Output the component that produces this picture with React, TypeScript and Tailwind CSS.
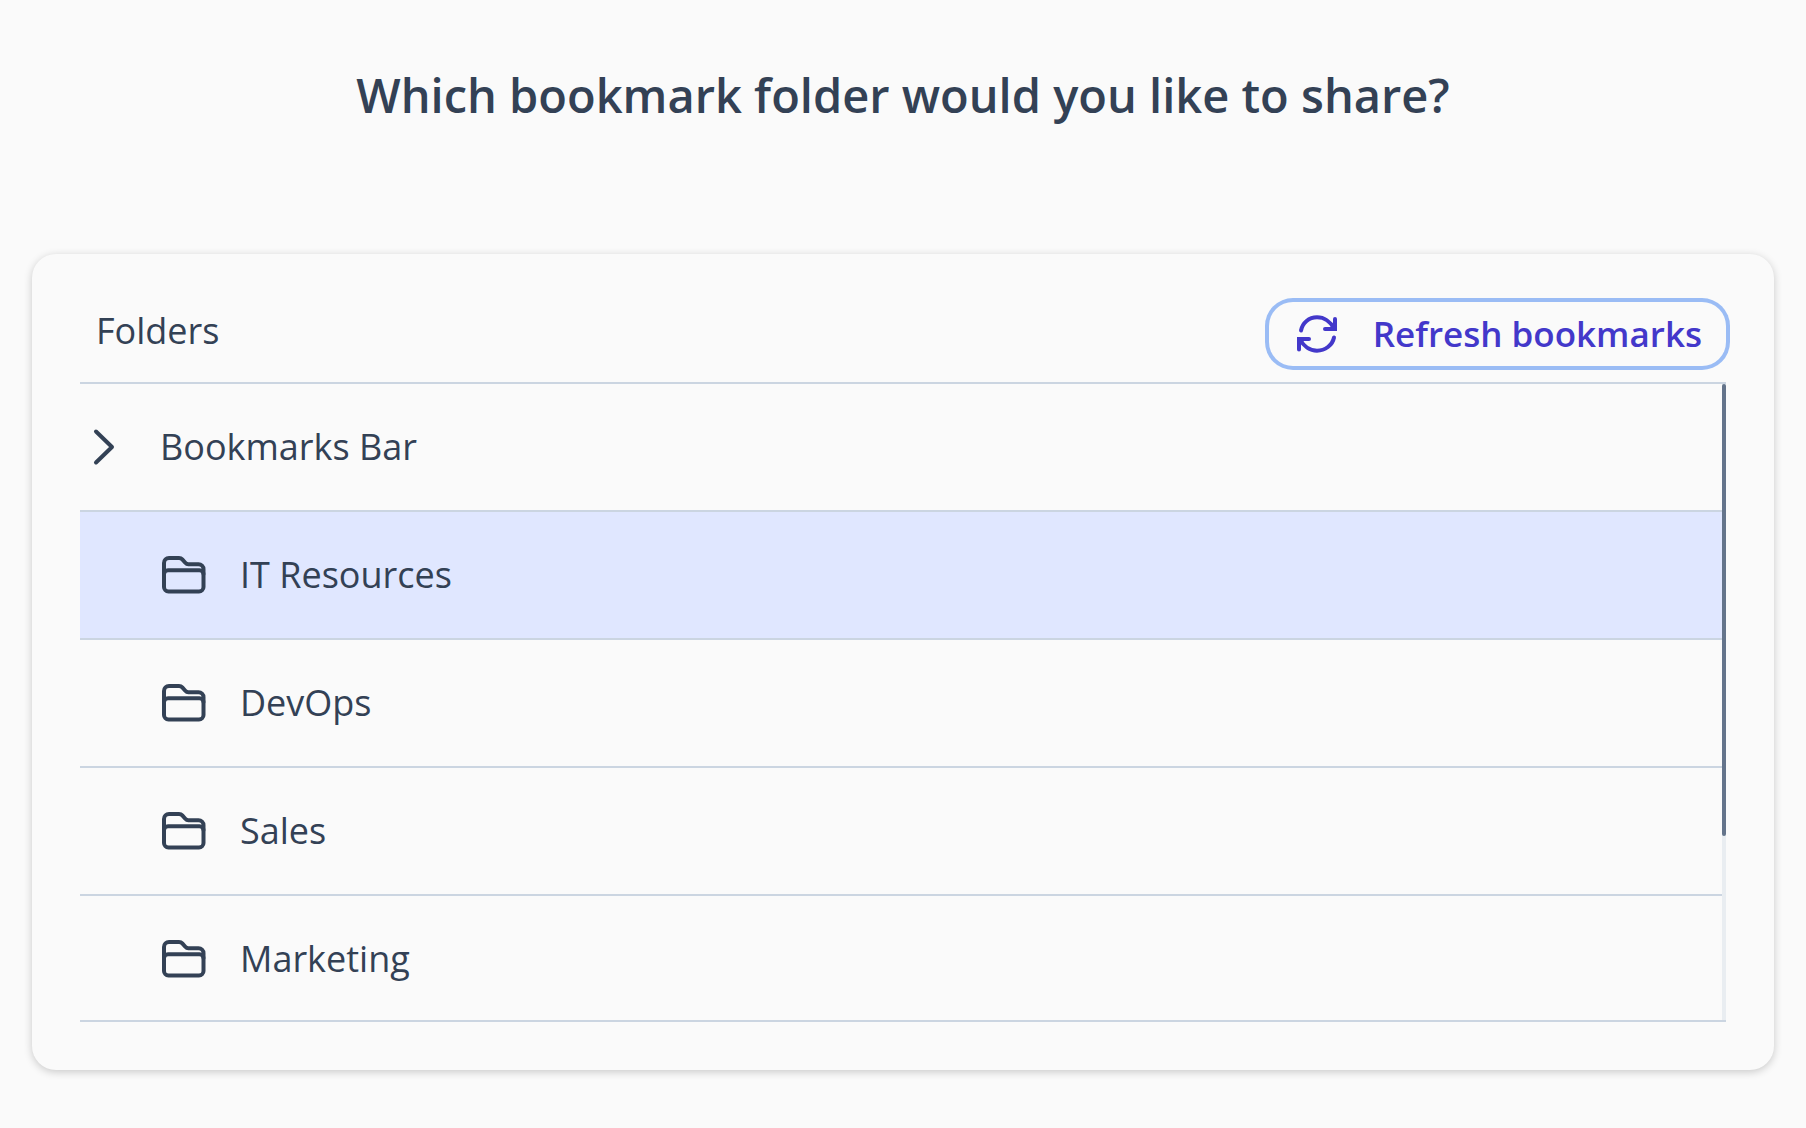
const folders = [
  { name: "IT Resources", selected: true },
  { name: "DevOps", selected: false },
  { name: "Sales", selected: false },
  { name: "Marketing", selected: false },
];

function RefreshIcon() {
  return (
    <svg
      className="w-12 h-12 shrink-0"
      viewBox="0 0 48 48"
      fill="none"
      stroke="currentColor"
      strokeWidth="4"
      strokeLinecap="round"
      strokeLinejoin="miter"
      aria-hidden="true"
    >
      <path d="M8 20.500C9.500 12.800 16 7.300 24 7.300c7.200 0 13.500 4.500 16.800 11" />
      <path d="M42 9v10H32" />
      <path d="M41 27.500C39.500 35.200 32 40.700 24 40.700c-7.200 0-13.500-4.500-16.800-11" />
      <path d="M6 39.500V29h10" />
    </svg>
  );
}

function FolderIcon() {
  return (
    <svg
      className="w-12 h-12 shrink-0"
      viewBox="0 0 48 48"
      fill="none"
      stroke="currentColor"
      strokeWidth="4"
      strokeLinecap="round"
      strokeLinejoin="round"
      aria-hidden="true"
    >
      <path d="M4 23V12a5 5 0 0 1 5-5h10c1.500 0 2.400.4 3.300 1.400l3 3.400c.9 1 1.700 1.500 3 1.500H38.500a5 5 0 0 1 5 5V23" />
      <path d="M8 19.300h31.500a4 4 0 0 1 4 4v12.700a4.500 4.500 0 0 1-4.500 4.500H8.500a4.500 4.500 0 0 1-4.500-4.500V23.300a4 4 0 0 1 4-4z" />
    </svg>
  );
}

function ChevronIcon() {
  return (
    <svg
      className="w-12 h-12 shrink-0"
      viewBox="0 0 48 48"
      fill="none"
      stroke="currentColor"
      strokeWidth="4"
      strokeLinecap="round"
      strokeLinejoin="round"
      aria-hidden="true"
    >
      <path d="M16 8.500 32 24 16 39.500" />
    </svg>
  );
}

export default function App() {
  return (
    <main className="min-h-screen bg-[#fafafa] px-8 pt-16 pb-14 font-['Open_Sans',sans-serif] text-[#334155]">
      <h1 className="text-center text-[47px] leading-[62px] font-semibold">
        Which bookmark folder would you like to share?
      </h1>

      <section className="mt-32 rounded-3xl bg-[#fafafa] p-12 shadow-[0_2px_8px_rgba(0,0,0,0.2)]">
        <header className="flex items-start justify-between border-b-2 border-[#cbd5e1] pb-4">
          <h2 className="pl-4 text-[36px] leading-[58px] font-medium">Folders</h2>
          <button
            type="button"
            className="flex h-16 items-center gap-8 rounded-3xl px-6 text-[35px] leading-[58px] font-semibold text-[#4338ca] ring-4 ring-[#9abcf5]"
          >
            <RefreshIcon />
            Refresh bookmarks
          </button>
        </header>

        <div className="flex h-[638px] border-b-2 border-[#cbd5e1]">
          <div className="flex-1 overflow-hidden">
            <button
              type="button"
              className="flex h-32 w-full items-center gap-8 border-b-2 border-[#cbd5e1] text-left text-[36px] leading-[58px]"
            >
              <ChevronIcon />
              Bookmarks Bar
            </button>
            {folders.map((folder) => (
              <button
                key={folder.name}
                type="button"
                className={`flex h-32 w-full items-center gap-8 border-b-2 border-[#cbd5e1] pl-20 text-left text-[36px] leading-[58px] ${
                  folder.selected ? "bg-[#e0e7ff] font-medium" : ""
                }`}
              >
                <FolderIcon />
                {folder.name}
              </button>
            ))}
          </div>
          <div className="w-1 bg-[#e9edf1]">
            <div className="h-[71%] rounded-full bg-[#64748b]" />
          </div>
        </div>
      </section>
    </main>
  );
}
